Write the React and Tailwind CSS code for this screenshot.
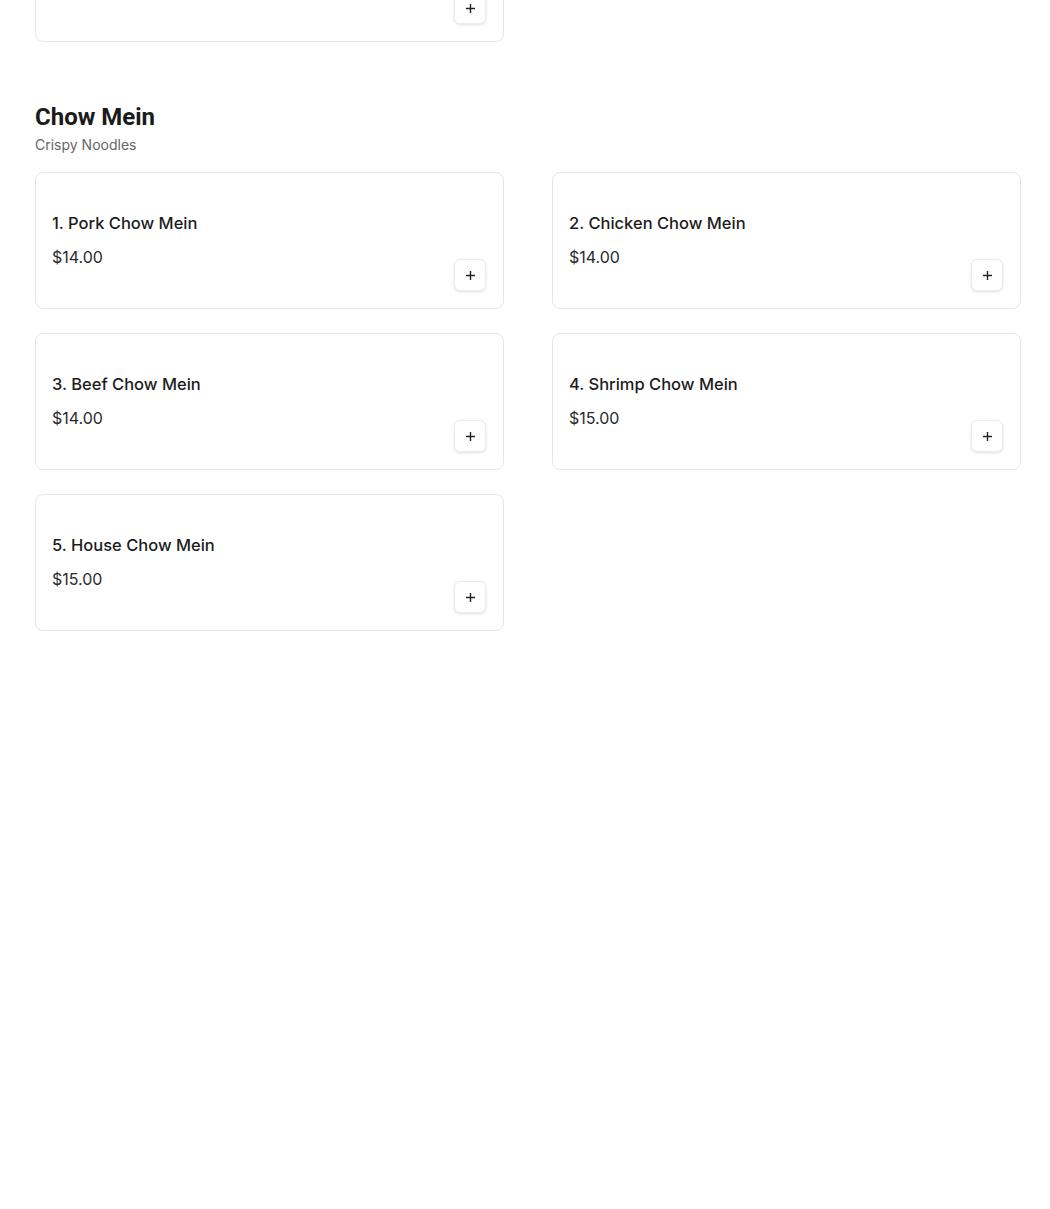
const items = [
  { name: "1. Pork Chow Mein", price: "$14.00" },
  { name: "2. Chicken Chow Mein", price: "$14.00" },
  { name: "3. Beef Chow Mein", price: "$14.00" },
  { name: "4. Shrimp Chow Mein", price: "$15.00" },
  { name: "5. House Chow Mein", price: "$15.00" },
];

const PlusButton = () => (
  <button className="flex items-center justify-center w-8 h-8 rounded-md border border-[#ececec] bg-white shadow-[0_1px_3px_rgba(0,0,0,0.12)]">
    <svg width="11" height="11" viewBox="0 0 11 11" fill="none">
      <path d="M5.5 1v9M1 5.5h9" stroke="#222" strokeWidth="1.4" />
    </svg>
  </button>
);

const ItemCard = ({ name, price }) => (
  <div className="h-[137px] border border-[#e6e6e6] rounded-lg bg-white pl-4 pr-[17px] pt-[38px]">
    <div className="h-6 text-[16.5px] leading-6 font-medium text-[#1c1c1c]">{name}</div>
    <div className="flex justify-between">
      <div className="mt-[10px] h-6 text-[16px] leading-6 text-[#2a2a2a]">{price}</div>
      <div className="mt-[24px]">
        <PlusButton />
      </div>
    </div>
  </div>
);

const App = () => {
  return (
    <div className="min-h-[1209px] bg-white pl-[35px] pr-[29px] overflow-hidden font-['Inter',sans-serif]">
      <div className="grid grid-cols-2 gap-x-[48px] mt-[-95px]">
        <ItemCard name="" price="" />
      </div>

      <section className="mt-[59px]">
        <h2 className="text-[24px] leading-8 font-bold text-[#1a1a1a] font-['Roboto',sans-serif]">Chow Mein</h2>
        <p className="mt-[2px] text-[14px] leading-5 text-[#666]">Crispy Noodles</p>

        <div className="mt-[17px] grid grid-cols-2 gap-x-[48px] gap-y-[24px]">
          {items.map((it) => (
            <ItemCard key={it.name} name={it.name} price={it.price} />
          ))}
        </div>
      </section>
    </div>
  );
};

export default App;
